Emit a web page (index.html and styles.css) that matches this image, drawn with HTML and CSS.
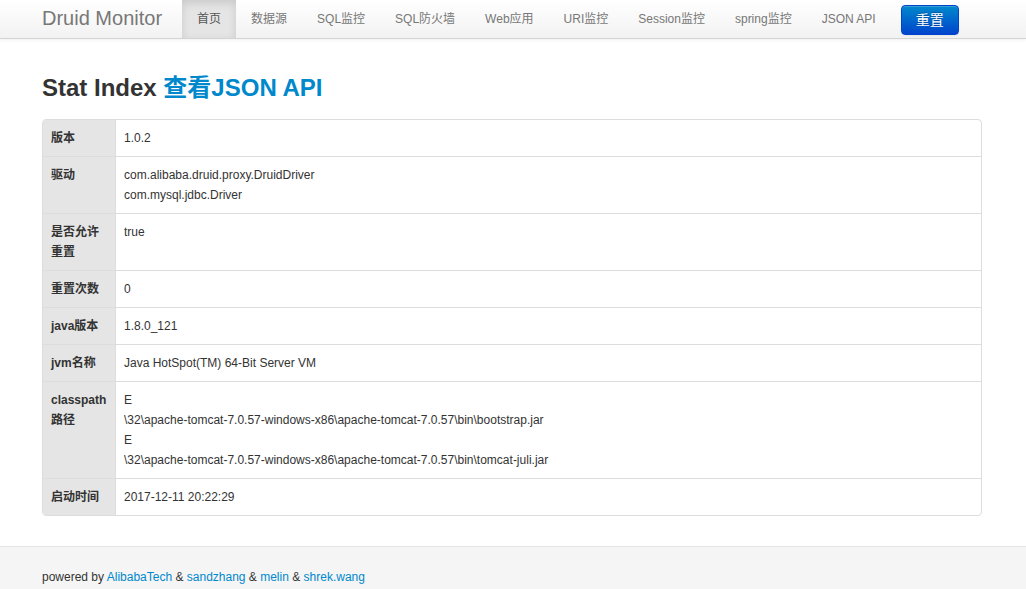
FILE: index.html
```html
<!DOCTYPE html>
<html lang="zh-CN">
<head>
<meta charset="utf-8">
<title>Druid Stat Index</title>
<link rel="stylesheet" href="styles.css">
</head>
<body>
<header class="navbar">
  <div class="container nav-row">
    <a class="brand" href="#">Druid Monitor</a>
    <ul class="nav">
      <li class="active"><a href="#">首页</a></li>
      <li><a href="#">数据源</a></li>
      <li><a href="#">SQL监控</a></li>
      <li><a href="#">SQL防火墙</a></li>
      <li><a href="#">Web应用</a></li>
      <li><a href="#">URI监控</a></li>
      <li><a href="#">Session监控</a></li>
      <li><a href="#">spring监控</a></li>
      <li><a href="#">JSON API</a></li>
    </ul>
    <button class="btn-primary" type="button">重置</button>
  </div>
</header>

<main class="container content">
  <h3 class="title">Stat Index <a href="#">查看JSON API</a></h3>
  <table class="stat-table">
    <tbody>
      <tr><th>版本</th><td>1.0.2</td></tr>
      <tr><th>驱动</th><td>com.alibaba.druid.proxy.DruidDriver<br>com.mysql.jdbc.Driver</td></tr>
      <tr><th>是否允许重置</th><td>true<br>&nbsp;</td></tr>
      <tr><th>重置次数</th><td>0</td></tr>
      <tr><th>java版本</th><td>1.8.0_121</td></tr>
      <tr><th>jvm名称</th><td>Java HotSpot(TM) 64-Bit Server VM</td></tr>
      <tr><th>classpath路径</th><td>E<br>\32\apache-tomcat-7.0.57-windows-x86\apache-tomcat-7.0.57\bin\bootstrap.jar<br>E<br>\32\apache-tomcat-7.0.57-windows-x86\apache-tomcat-7.0.57\bin\tomcat-juli.jar</td></tr>
      <tr><th>启动时间</th><td>2017-12-11 20:22:29</td></tr>
    </tbody>
  </table>
</main>

<footer class="footer">
  <div class="container">
    powered by <a href="#">AlibabaTech</a> &amp; <a href="#">sandzhang</a> &amp; <a href="#">melin</a> &amp; <a href="#">shrek.wang</a>
  </div>
</footer>
</body>
</html>
```

FILE: styles.css
```css
* { box-sizing: border-box; }

html, body {
  margin: 0;
  padding: 0;
}

body {
  font-family: "Liberation Sans", Arial, "Noto Sans CJK SC", sans-serif;
  font-size: 12px;
  line-height: 20px;
  color: #333;
  background: #fff;
}

a {
  color: #0088cc;
  text-decoration: none;
}

.container {
  width: 940px;
  margin-left: calc(50% - 471px);
}

/* Navbar */
.navbar {
  height: 39px;
  background: linear-gradient(to bottom, #ffffff, #f2f2f2);
  border-bottom: 1px solid #d4d4d4;
  box-shadow: 0 1px 4px rgba(0, 0, 0, 0.065);
}

.nav-row {
  display: flex;
  align-items: flex-start;
}

.brand {
  display: block;
  padding: 8px 20px 10px 0;
  font-size: 20px;
  line-height: 20px;
  color: #777;
}

.nav {
  display: flex;
  list-style: none;
  margin: 0;
  padding: 0;
}

.nav li a {
  display: block;
  padding: 9px 15px;
  line-height: 20px;
  color: #777;
}

.nav li.active a {
  background: #e5e5e5;
  color: #555;
  box-shadow: inset 0 3px 8px rgba(0, 0, 0, 0.125);
}

.btn-primary {
  margin: 5px 0 0 10px;
  height: 30px;
  padding: 4px 14px;
  font-family: "Liberation Sans", Arial, "Noto Sans CJK SC", sans-serif;
  font-size: 14px;
  line-height: 20px;
  color: #fff;
  background: linear-gradient(to bottom, #0088cc, #0044cc);
  border: 1px solid #0044cc;
  border-radius: 4px;
  text-shadow: 0 -1px 0 rgba(0, 0, 0, 0.25);
  box-shadow: inset 0 1px 0 rgba(255, 255, 255, 0.2), 0 1px 2px rgba(0, 0, 0, 0.05);
}

/* Content */
.content {
  padding-top: 29px;
}

.title {
  margin: 0 0 11px;
  font-size: 24px;
  line-height: 40px;
  font-weight: bold;
  color: #333;
}

.stat-table {
  width: 100%;
  border-collapse: separate;
  border-spacing: 0;
  border: 1px solid #ddd;
  border-radius: 4px;
  overflow: hidden;
}

.stat-table th,
.stat-table td {
  padding: 8px;
  line-height: 20px;
  text-align: left;
  vertical-align: top;
  border-top: 1px solid #ddd;
}

.stat-table tr:first-child th,
.stat-table tr:first-child td {
  border-top: 0;
}

.stat-table th {
  width: 72px;
  background: #e5e5e5;
  font-weight: bold;
  color: #333;
}

.stat-table td {
  border-left: 1px solid #ddd;
}

/* Footer */
.footer {
  margin-top: 30px;
  padding: 20px 0 30px;
  background: #f5f5f5;
  border-top: 1px solid #e5e5e5;
}
```
